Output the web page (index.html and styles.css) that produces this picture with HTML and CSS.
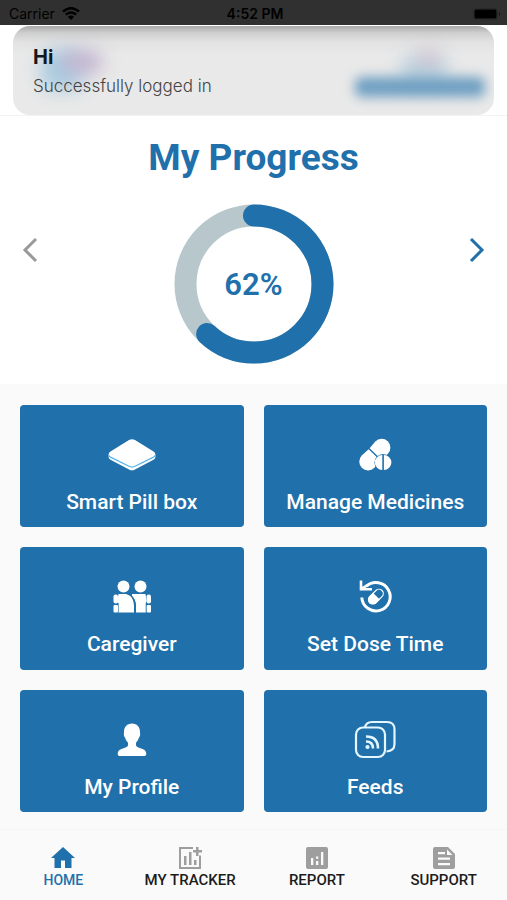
FILE: index.html
```html
<!DOCTYPE html>
<html lang="en">
<head>
<meta charset="utf-8">
<meta name="viewport" content="width=device-width, initial-scale=1">
<title>My Progress</title>
<link rel="stylesheet" href="styles.css">
</head>
<body>
<div class="app">
  <div class="status">
    <div class="status-left">
      <span>Carrier</span>
      <svg class="wifi" viewBox="0 0 18 13" aria-hidden="true"><path d="M1 4.5Q9-2.2 17 4.5M3.8 7.6Q9 3.4 14.2 7.6" fill="none" stroke="#000" stroke-width="2.4"/><path d="M9 13 5.8 9.8Q9 7.4 12.2 9.8Z"/></svg>
    </div>
    <span class="clock">4:52 PM</span>
    <div class="status-right">
      <svg class="battery" viewBox="0 0 28 12" aria-hidden="true"><rect x=".5" y=".5" width="24" height="11" rx="2.5" fill="none" stroke="#292929"/><rect x="1.500" y="1.500" width="22" height="9" rx="1.500"/><path d="M26 4q2 2 0 4z" fill="#111"/></svg>
    </div>
  </div>

  <header class="header">
    <div class="toast" role="status">
      <span class="glow glow-blue" aria-hidden="true"></span>
      <span class="glow glow-violet" aria-hidden="true"></span>
      <span class="glow glow-logo" aria-hidden="true"></span>
      <span class="glow glow-pink" aria-hidden="true"></span>
      <span class="glow glow-bar" aria-hidden="true"></span>
      <strong class="toast-title">Hi</strong>
      <p class="toast-text">Successfully logged in</p>
    </div>
  </header>

  <main class="main">
    <section class="progress">
      <h1 class="title">My Progress</h1>
      <div class="carousel">
        <button class="arrow arrow-prev" type="button" aria-label="Previous"><svg viewBox="0 0 16 26"><path d="M14 2 3 13l11 11"/></svg></button>
        <div class="ring">
          <svg class="ring-chart" viewBox="0 0 160 160" aria-hidden="true">
            <circle class="ring-track" cx="80" cy="80" r="68.500"/>
            <circle class="ring-value" cx="80" cy="80" r="68.500" pathLength="100" transform="rotate(-90 80 80)"/>
          </svg>
          <span class="ring-label">62%</span>
        </div>
        <button class="arrow arrow-next" type="button" aria-label="Next"><svg viewBox="0 0 16 26"><path d="m2 2 11 11L2 24"/></svg></button>
      </div>
    </section>

    <section class="tiles">
      <button class="tile" type="button">
        <svg class="tile-icon" viewBox="0 0 48 40" aria-hidden="true">
          <path fill="#fff" d="M21 5q3-1.600 6 0L45.500 16.500q1.900 1.200 1.900 3v2.500q0 1.500-1.900 2.700L27 34.500q-3 1.700-6 0L2.500 24.700Q.6 23.500.6 22v-2.500q0-1.800 1.900-3Z"/>
          <path fill="none" stroke="#55b4ec" stroke-width="1.200" d="M1 20.500q.4 1 1.500 1.600L21 31.300q3 1.500 6 0l18.500-9.200q1.100-.6 1.500-1.600"/>
        </svg>
        <span>Smart Pill box</span>
      </button>
      <button class="tile" type="button">
        <svg class="tile-icon" viewBox="0 0 48 40" aria-hidden="true">
          <g transform="translate(24 19.500) rotate(-46)" fill="#fff">
            <path d="M-.6-8.300-10-8.800a8.800 8.800 0 0 0 0 17.600l9.400-.5Z"/>
            <path d="M.8-8.300 9.500-8.800a8.800 8.800 0 0 1 0 17.600L.8 8.300Z"/>
          </g>
          <circle cx="32" cy="27.500" r="8.600" fill="#1f70ab"/>
          <path fill="#fff" d="M31.300 20a7.500 7.500 0 0 0 0 15zM32.900 20a7.500 7.500 0 0 1 0 15z"/>
        </svg>
        <span>Manage Medicines</span>
      </button>
      <button class="tile" type="button">
        <svg class="tile-icon" viewBox="0 0 48 40" aria-hidden="true">
          <g fill="#fff">
            <circle cx="15.500" cy="9.500" r="6"/><circle cx="32.500" cy="9.500" r="6"/>
            <path d="M10.500 17H18c5.500 1.500 7.500 5 8 11.500v7H10v-9l-1-2z"/>
            <path d="M24 17h13.500l1 7-.5 1.500v10H28v-7q0-5.500-4-9.500z"/>
            <rect x="5.500" y="17.500" width="4.500" height="9" rx="2"/><rect x="38.500" y="17.500" width="4.500" height="9" rx="2"/>
            <rect x="5.500" y="28" width="4.500" height="7.500" rx="1"/><rect x="38.500" y="28" width="4.500" height="7.500" rx="1"/>
          </g>
          <path d="M20 17c5 2 7 6 7 11.500v7" fill="none" stroke="#1f70ab" stroke-width="1"/>
          <path d="M10.500 26v9.500M38 26v9.500" stroke="#1f70ab" stroke-width=".6"/>
        </svg>
        <span>Caregiver</span>
      </button>
      <button class="tile" type="button">
        <svg class="tile-icon" viewBox="0 0 48 40" aria-hidden="true">
          <path fill="none" stroke="#fff" stroke-width="3" d="M15.500 9.200a14.200 14.200 0 1 1-4.700 11.300"/>
          <path fill="none" stroke="#fff" stroke-width="2.600" d="M10 3.500v8.700h11M10 12.200l6.500-4"/>
          <g transform="translate(25 19.500) rotate(-45)"><rect x="-8.500" y="-4.300" width="17" height="8.600" rx="4.300" fill="none" stroke="#fff" stroke-width="1.200"/><path fill="#fff" d="M.5-4.900h-5a4.900 4.900 0 0 0 0 9.800h5z"/></g>
        </svg>
        <span>Set Dose Time</span>
      </button>
      <button class="tile" type="button">
        <svg class="tile-icon" viewBox="0 0 48 40" aria-hidden="true">
          <path fill="#fff" d="M24 3.500c5 0 8 3.500 8 8.500 0 1.500.3 2 .1 3.300-.2 1.400-1 1.700-1.400 2.900-.5 1.700-1.700 3.300-2.700 4.500v2.800q.5 1.500 3 2.200c4 1.200 7.300 2.300 7.300 6.300 0 1.500-1 2-2.300 2H12c-1.300 0-2.300-.5-2.300-2 0-4 3.300-5.100 7.300-6.300q2.500-.7 3-2.200v-2.800c-1-1.200-2.200-2.800-2.700-4.500-.4-1.200-1.200-1.500-1.400-2.900-.2-1.300.1-1.800.1-3.300 0-5 3-8.500 8-8.500Z"/>
        </svg>
        <span>My Profile</span>
      </button>
      <button class="tile" type="button">
        <svg class="tile-icon" viewBox="0 0 48 40" aria-hidden="true">
          <g fill="none" stroke="#e4f6ff" stroke-width="2.200">
            <rect x="5" y="7.500" width="29" height="29.500" rx="7"/>
            <path d="M14 7.500q1-5.500 7-5.500h15q7.500 0 7.500 7.500V24q0 7-8 7.500"/>
            <path stroke-width="2.600" d="M15 21.500q7 0 7 7M15 16.500q12 0 12 12"/>
          </g>
          <circle cx="16.500" cy="27" r="2.100" fill="#e4f6ff"/>
        </svg>
        <span>Feeds</span>
      </button>
    </section>
  </main>

  <nav class="nav">
    <a class="nav-item nav-active" href="#home">
      <svg viewBox="0 0 24 24" aria-hidden="true"><path d="M10 22v-7.500h4V22h6.500V12H24L12 1 0 12h3.500v10z"/></svg>
      <span>HOME</span>
    </a>
    <a class="nav-item" href="#tracker">
      <svg viewBox="0 0 24 24" aria-hidden="true"><path d="M15 1v2H3v18h18V9.500h2V23H1V1zM6 10h2.500v9H6zM11 6h2.500v13H11zM16 14h2.500v5H16zM18 1h2.500v3H24v2.500h-3.500V10H18V6.500h-3V4h3z"/></svg>
      <span>MY TRACKER</span>
    </a>
    <a class="nav-item" href="#report">
      <svg viewBox="0 0 24 24" aria-hidden="true"><path fill-rule="evenodd" d="M3 1h18q2 0 2 2v18q0 2-2 2H3q-2 0-2-2V3q0-2 2-2zm3 11v7h2.300v-7zm5 3v4h2.300v-4zm0-4.500v2.300h2.300v-2.300zM16 6v13h2.300V6z"/></svg>
      <span>REPORT</span>
    </a>
    <a class="nav-item" href="#support">
      <svg viewBox="0 0 24 24" aria-hidden="true"><path fill-rule="evenodd" d="M3 1h13l7 7v13q0 2-2 2H3q-2 0-2-2V3q0-2 2-2zm3 5v2.200h7V6zm9-2.500V9h5.500zM6 11.500v2.200h12v-2.200zM6 17v2.200h12V17z"/></svg>
      <span>SUPPORT</span>
    </a>
  </nav>
</div>
</body>
</html>
```
FILE: styles.css
```css
* {
  box-sizing: border-box;
}

body {
  margin: 0;
  background: #fafafa;
  color: #222;
  font-family: Roboto, "Liberation Sans", sans-serif;
}

button {
  border: 0;
  padding: 0;
  background: none;
  font: inherit;
  cursor: pointer;
}

.app {
  display: flex;
  flex-direction: column;
  min-height: 100vh;
}

.status {
  display: grid;
  grid-template-columns: 1fr auto 1fr;
  align-items: center;
  height: 25px;
  padding: 2px 6px 0 9px;
  background: #303030;
  color: #000;
  font: 14px/20px Inter, sans-serif;
}

.status-left {
  display: flex;
  align-items: center;
  gap: 7px;
}

.wifi {
  width: 18px;
  height: 13px;
}

.clock {
  font-weight: 600;
}

.status-right {
  display: flex;
  justify-content: flex-end;
}

.battery {
  width: 28px;
  height: 12px;
}

.header {
  padding: 1px 13px 0;
  background: #fff;
  border-bottom: 1px solid #f3f3f3;
}

.toast {
  position: relative;
  overflow: hidden;
  height: 89px;
  padding: 20px;
  border-radius: 17px;
  background: linear-gradient(#a9a9a9, #cfcfcf 7px, #e2e2e2 16px, #e9e9e9 28px);
  font-family: Inter, sans-serif;
}

.toast-title,
.toast-text {
  position: relative;
  display: block;
  margin: 0;
}

.toast-title {
  color: #111820;
  font-size: 20px;
  line-height: 22px;
}

.toast-text {
  margin-top: 7px;
  color: #444;
  font-size: 17px;
  font-weight: 300;
  line-height: 22px;
}

.glow {
  position: absolute;
  border-radius: 12px;
  filter: blur(9px);
}

.glow-blue {
  left: 28px;
  top: 24px;
  width: 42px;
  height: 40px;
  background: #a9cbe0;
}

.glow-violet {
  left: 48px;
  top: 25px;
  width: 42px;
  height: 22px;
  background: #c3b4cf;
}

.glow-logo {
  left: 388px;
  top: 30px;
  width: 46px;
  height: 28px;
  background: #b8d0de;
}

.glow-pink {
  left: 406px;
  top: 24px;
  width: 18px;
  height: 16px;
  background: #d8bccb;
}

.glow-bar {
  right: 9px;
  bottom: 18px;
  width: 130px;
  height: 20px;
  border-radius: 6px;
  background: #6f9fc2;
  filter: blur(6px);
}

.main {
  display: flex;
  flex: 1;
  flex-direction: column;
}

.progress {
  padding: 20px 22px;
  background: #fff;
}

.title {
  margin: 0 0 24px;
  color: #1f70ab;
  font-size: 37px;
  font-weight: 700;
  line-height: 44px;
  text-align: center;
}

.carousel {
  display: flex;
  justify-content: space-between;
}

.arrow {
  align-self: flex-start;
  padding-top: 33px;
}

.arrow svg {
  display: block;
  width: 16px;
  height: 26px;
  fill: none;
  stroke: #999;
  stroke-width: 3;
}

.arrow-next svg {
  stroke: #1f70ab;
}

.ring {
  display: grid;
  place-items: center;
}

.ring > * {
  grid-area: 1 / 1;
}

.ring-chart {
  display: block;
  width: 160px;
  height: 160px;
  fill: none;
  stroke-width: 22;
}

.ring-track {
  stroke: #b7c7cc;
}

.ring-value {
  stroke: #1f70ab;
  stroke-dasharray: 62 100;
  stroke-linecap: round;
}

.ring-label {
  color: #1f70ab;
  font-size: 31px;
  font-weight: 600;
}

.tiles {
  display: grid;
  flex: 1;
  grid-template-columns: 1fr 1fr;
  grid-auto-rows: minmax(122px, 1fr);
  gap: 20px;
  padding: 21px 20px 17px;
}

.tile {
  display: flex;
  flex-direction: column;
  align-items: center;
  justify-content: center;
  gap: 15px;
  padding-top: 17px;
  border-radius: 4px;
  background: #1f70ab;
  color: #fff;
  font-size: 21px;
  font-weight: 500;
  line-height: 24px;
}

.tile-icon {
  width: 48px;
  height: 40px;
}

.nav {
  display: grid;
  grid-template-columns: repeat(4, 1fr);
  height: 71px;
  padding-top: 16px;
  border-top: 1px solid #f5f5f5;
  background: #fafafa;
}

.nav-item {
  display: flex;
  flex-direction: column;
  align-items: center;
  gap: 1px;
  color: #1c1c1c;
  font-size: 15px;
  font-weight: 500;
  line-height: 18px;
  text-decoration: none;
}

.nav-item svg {
  width: 24px;
  height: 24px;
  fill: #9e9e9e;
}

.nav-active {
  color: #1f70ab;
  font-size: 14px;
}

.nav-active svg {
  fill: #1f70ab;
}
```
